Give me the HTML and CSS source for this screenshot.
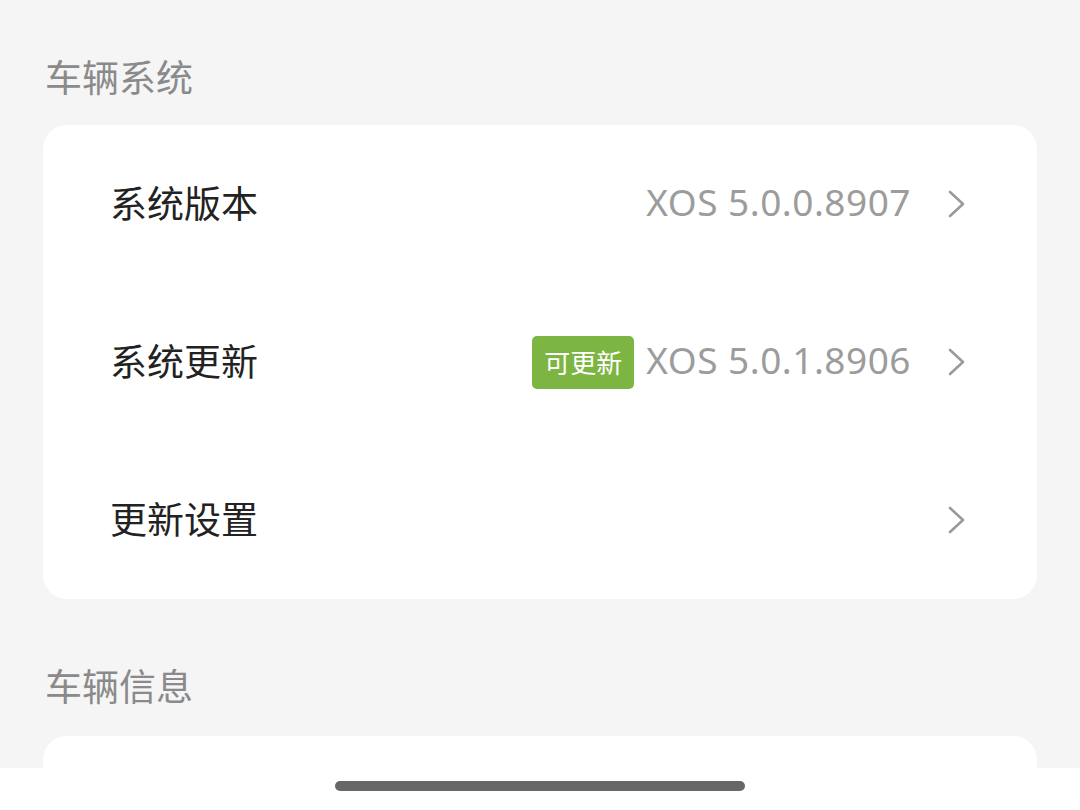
FILE: index.html
```html
<!DOCTYPE html>
<html lang="zh-CN">
<head>
  <meta charset="UTF-8" />
  <meta name="viewport" content="width=device-width, initial-scale=1.0"/>
  <title>车辆系统</title>
  <link rel="stylesheet" href="styles.css">
</head>
<body>
  <div class="screen">
    <div class="content">
      <div class="section-title first">车辆系统</div>
      <div class="card">
        <div class="row">
          <span class="label">系统版本</span>
          <span class="value">XOS 5.0.0.8907</span>
          <svg class="chevron" viewBox="0 0 20 30"><path d="M3 3 L16 15 L3 27" /></svg>
        </div>
        <div class="row">
          <span class="label">系统更新</span>
          <span class="badge">可更新</span>
          <span class="value">XOS 5.0.1.8906</span>
          <svg class="chevron" viewBox="0 0 20 30"><path d="M3 3 L16 15 L3 27" /></svg>
        </div>
        <div class="row">
          <span class="label">更新设置</span>
          <svg class="chevron" viewBox="0 0 20 30"><path d="M3 3 L16 15 L3 27" /></svg>
        </div>
      </div>

      <div class="section-title">车辆信息</div>
      <div class="card">
        <div class="row"></div>
      </div>
    </div>
    <div class="home-bar">
      <div class="indicator"></div>
    </div>
  </div>
</body>
</html>
```

FILE: styles.css
```css
* {
  box-sizing: border-box;
}

body {
  margin: 0;
  font-family: "Noto Sans", "Noto Sans CJK SC", sans-serif;
  background: #f5f5f5;
  color: #222;
}

.screen {
  height: 810px;
  display: flex;
  flex-direction: column;
  overflow: hidden;
}

.content {
  flex: 1;
  overflow: hidden;
  padding: 0 43px;
}

.section-title {
  font-size: 37px;
  line-height: 50px;
  color: #8a8a8a;
  padding-left: 2px;
  margin: 63px 0 24px;
}

.section-title.first {
  margin: 53px 0 22px;
}

.card {
  background: #ffffff;
  border-radius: 24px;
}

.row {
  height: 158px;
  display: flex;
  align-items: center;
  padding: 0 70px 5px 67px;
}

.label {
  flex: 1;
  font-size: 37px;
  color: #222;
}

.value {
  font-size: 37px;
  color: #9c9c9c;
  margin-right: 36px;
  letter-spacing: 0.5px;
}

.badge {
  background: #7db542;
  color: #ffffff;
  font-size: 26px;
  height: 53px;
  width: 102px;
  border-radius: 5px;
  display: flex;
  align-items: center;
  justify-content: center;
  margin-right: 12px;
  margin-top: 5px;
}

.chevron {
  width: 20px;
  height: 30px;
  margin-top: 5px;
  fill: none;
  stroke: #9a9a9a;
  stroke-width: 2.6;
  stroke-linecap: round;
  stroke-linejoin: round;
}

.home-bar {
  height: 42px;
  background: #ffffff;
  display: flex;
  justify-content: center;
  padding-top: 13px;
}

.indicator {
  width: 410px;
  height: 10px;
  border-radius: 5px;
  background: #676767;
}
```
